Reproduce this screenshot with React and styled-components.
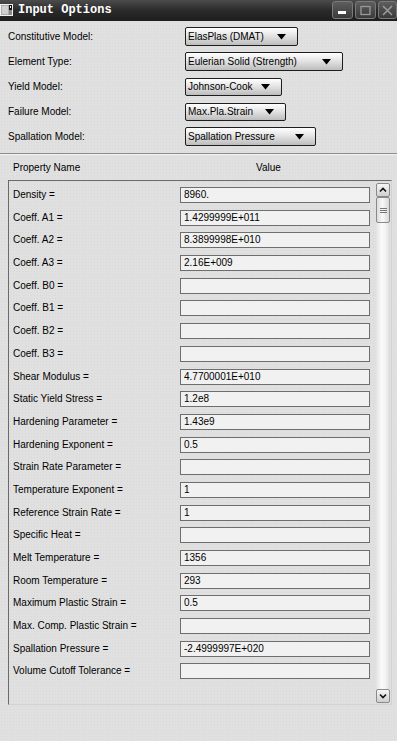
import React from "react";
import styled, { createGlobalStyle } from "styled-components";

const GlobalStyle = createGlobalStyle`
  body {
    margin: 0;
    background: #e0e0e0;
    font-family: "Liberation Sans", Arial, sans-serif;
  }
`;

const Window = styled.div`
  width: 397px;
  height: 741px;
  display: flex;
  flex-direction: column;
  background-color: #e0e0e0;
  background-image: radial-gradient(rgba(0, 0, 0, 0.035) 0.6px, transparent 0.8px);
  background-size: 3px 3px;
  overflow: hidden;
`;

const TitleBar = styled.div`
  height: 21px;
  flex: none;
  display: flex;
  align-items: flex-start;
  background: linear-gradient(#4c4c4c, #2a2a2a 50%, #1d1d1d);
`;

const TitleIcon = styled.svg`
  margin: 4px 0 0 0;
  flex: none;
`;

const TitleText = styled.span`
  margin: 3px 0 0 5px;
  font-family: "Liberation Mono", "Courier New", monospace;
  font-weight: bold;
  font-size: 12px;
  line-height: 14px;
  color: #ffffff;
`;

const Controls = styled.div`
  margin-left: auto;
  margin-top: 1px;
  display: flex;
  gap: 2px;
`;

const CtrlButton = styled.div`
  width: ${(p) => p.w}px;
  height: 18px;
  box-sizing: border-box;
  border: 1px solid #7a7a7a;
  border-radius: 3px;
  background: linear-gradient(#5e5e5e, #3a3a3a);
  display: flex;
  align-items: center;
  justify-content: center;
`;

const Form = styled.div`
  display: flex;
  flex-direction: column;
  gap: 6px;
  padding: 6px 0 7px 8px;
`;

const FormRow = styled.div`
  display: flex;
  align-items: center;
  height: 19px;
`;

const FormLabel = styled.span`
  width: 177px;
  font-size: 10px;
  color: #000;
`;

const Select = styled.div`
  width: ${(p) => p.w}px;
  height: ${(p) => p.h || 19}px;
  box-sizing: border-box;
  border: 1px solid #1e1e1e;
  border-radius: 2px;
  background: linear-gradient(#ffffff, #e4e4e4 45%, #bdbdbd);
  display: flex;
  align-items: center;
  padding: 0 11px 0 2px;
  font-size: 10px;
  color: #000;
`;

const SelectText = styled.span`
  flex: 1;
  white-space: nowrap;
`;

const Separator = styled.div`
  height: 0;
  border-top: 1px solid #8c8c8c;
  border-bottom: 1px solid #f2f2f2;
`;

const Header = styled.div`
  height: 25px;
  display: flex;
  align-items: center;
  padding: 0 0 0 13px;
  font-size: 10px;
  color: #000;
`;

const HeaderName = styled.span`
  width: 167px;
`;

const HeaderValue = styled.span`
  width: 177px;
  text-align: center;
`;

const Box = styled.div`
  margin: 0 5px 0 8px;
  height: 525px;
  box-sizing: border-box;
  border: 1px solid;
  border-color: #6a6a6a #d2d2d2 #d2d2d2 #6a6a6a;
  display: flex;
`;

const List = styled.div`
  flex: 1;
  padding: 6px 0 0 4px;
  display: flex;
  flex-direction: column;
`;

const PropRow = styled.div`
  height: 22.7px;
  flex: none;
  display: flex;
  align-items: flex-start;
`;

const PropLabel = styled.span`
  width: 167px;
  line-height: 16px;
  font-size: 10px;
  color: #000;
  white-space: nowrap;
`;

const PropInput = styled.div`
  width: 190px;
  height: 16px;
  box-sizing: border-box;
  border: 1px solid #6e6e6e;
  background: #f1f1f1;
  font-size: 10px;
  line-height: 14px;
  padding-left: 3px;
  color: #000;
`;

const ScrollBar = styled.div`
  width: 14px;
  margin-right: 1px;
  padding: 2px 0 1px;
  display: flex;
  flex-direction: column;
`;

const ScrollBtn = styled.div`
  height: 14px;
  box-sizing: border-box;
  border: 1px solid #8a8a8a;
  border-radius: 2px;
  background: linear-gradient(#f6f6f6, #cfcfcf);
  display: flex;
  align-items: center;
  justify-content: center;
`;

const Thumb = styled.div`
  height: 26px;
  box-sizing: border-box;
  border: 1px solid #8a8a8a;
  border-radius: 2px;
  background: linear-gradient(to right, #dcdcdc, #f8f8f8 45%, #d8d8d8);
  display: flex;
  align-items: center;
  justify-content: center;
`;

const Track = styled.div`
  flex: 1;
  background: linear-gradient(to right, #e2e2e2, #fbfbfb 40%, #f2f2f2 70%, #dadada);
`;

const Footer = styled.div`
  flex: 1;
`;

const selects = [
  { label: "Constitutive Model:", value: "ElasPlas (DMAT)", w: 113 },
  { label: "Element Type:", value: "Eulerian Solid (Strength)", w: 158 },
  { label: "Yield Model:", value: "Johnson-Cook", w: 97, h: 18 },
  { label: "Failure Model:", value: "Max.Pla.Strain", w: 101, h: 18 },
  { label: "Spallation Model:", value: "Spallation Pressure", w: 131 },
];

const props = [
  ["Density =", "8960."],
  ["Coeff. A1 =", "1.4299999E+011"],
  ["Coeff. A2 =", "8.3899998E+010"],
  ["Coeff. A3 =", "2.16E+009"],
  ["Coeff. B0 =", ""],
  ["Coeff. B1 =", ""],
  ["Coeff. B2 =", ""],
  ["Coeff. B3 =", ""],
  ["Shear Modulus =", "4.7700001E+010"],
  ["Static Yield Stress =", "1.2e8"],
  ["Hardening Parameter =", "1.43e9"],
  ["Hardening Exponent =", "0.5"],
  ["Strain Rate Parameter =", ""],
  ["Temperature Exponent =", "1"],
  ["Reference Strain Rate =", "1"],
  ["Specific Heat =", ""],
  ["Melt Temperature =", "1356"],
  ["Room Temperature =", "293"],
  ["Maximum Plastic Strain =", "0.5"],
  ["Max. Comp. Plastic Strain =", ""],
  ["Spallation Pressure =", "-2.4999997E+020"],
  ["Volume Cutoff Tolerance =", ""],
];

const DownTri = () => (
  <svg width="9" height="6" viewBox="0 0 9 6">
    <polygon points="0,0 9,0 4.5,5.5" fill="#000" />
  </svg>
);

const App = () => {
  return (
    <Window>
      <GlobalStyle />
      <TitleBar>
        <TitleIcon width="13" height="12" viewBox="0 0 13 12">
          <rect x="0.5" y="0.5" width="12" height="11" fill="#8a8a8a" stroke="#f2f2f2" />
          <rect x="1.5" y="1.5" width="7" height="9" fill="#cfcfcf" />
          <rect x="9" y="1" width="3" height="5" fill="#111" />
          <rect x="10" y="2" width="1" height="2" fill="#fff" />
        </TitleIcon>
        <TitleText>Input Options</TitleText>
        <Controls>
          <CtrlButton w={21}>
            <svg width="11" height="11" viewBox="0 0 11 11">
              <rect x="1" y="6" width="8" height="3" fill="#ffffff" />
            </svg>
          </CtrlButton>
          <CtrlButton w={21}>
            <svg width="11" height="11" viewBox="0 0 11 11">
              <rect x="1" y="1.5" width="9" height="8" fill="none" stroke="#9a9a9a" strokeWidth="1.3" />
            </svg>
          </CtrlButton>
          <CtrlButton w={19}>
            <svg width="11" height="11" viewBox="0 0 11 11">
              <path d="M1 1 L10 10 M10 1 L1 10" stroke="#9a9a9a" strokeWidth="1.6" />
            </svg>
          </CtrlButton>
        </Controls>
      </TitleBar>

      <Form>
        {selects.map((s) => (
          <FormRow key={s.label}>
            <FormLabel>{s.label}</FormLabel>
            <Select w={s.w} h={s.h}>
              <SelectText>{s.value}</SelectText>
              <DownTri />
            </Select>
          </FormRow>
        ))}
      </Form>

      <Separator />

      <Header>
        <HeaderName>Property Name</HeaderName>
        <HeaderValue>Value</HeaderValue>
      </Header>

      <Box>
        <List>
          {props.map(([label, value]) => (
            <PropRow key={label}>
              <PropLabel>{label}</PropLabel>
              <PropInput>{value}</PropInput>
            </PropRow>
          ))}
        </List>
        <ScrollBar>
          <ScrollBtn>
            <svg width="8" height="6" viewBox="0 0 8 6">
              <path d="M1 4.5 L4 1.5 L7 4.5" fill="none" stroke="#111" strokeWidth="1.6" />
            </svg>
          </ScrollBtn>
          <Thumb>
            <svg width="7" height="7" viewBox="0 0 7 7">
              <path d="M0 1.5 H7 M0 3.5 H7 M0 5.5 H7" stroke="#777" strokeWidth="1" />
            </svg>
          </Thumb>
          <Track />
          <ScrollBtn>
            <svg width="8" height="6" viewBox="0 0 8 6">
              <path d="M1 1.5 L4 4.5 L7 1.5" fill="none" stroke="#111" strokeWidth="1.6" />
            </svg>
          </ScrollBtn>
        </ScrollBar>
      </Box>

      <Footer />
    </Window>
  );
};

export default App;
